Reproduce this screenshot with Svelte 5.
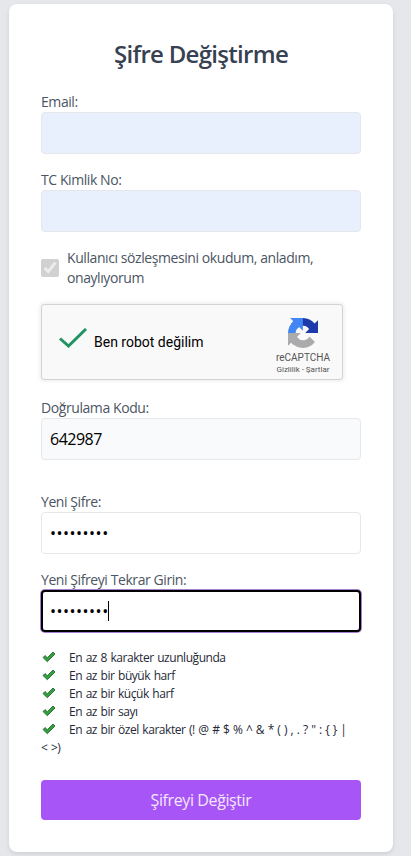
<script lang="ts">
	const rules = [
		'En az 8 karakter uzunluğunda',
		'En az bir büyük harf',
		'En az bir küçük harf',
		'En az bir sayı',
		'En az bir özel karakter (! @ # $ % ^ & * ( ) , . ? " : { } | <\u00a0>)'
	];
</script>

<div class="page">
	<form class="card" onsubmit={(e) => e.preventDefault()}>
		<h1>Şifre Değiştirme</h1>

		<div class="field email">
			<label for="email">Email:</label>
			<input id="email" class="autofilled" type="text" />
		</div>

		<div class="field tc">
			<label for="tc">TC Kimlik No:</label>
			<input id="tc" class="autofilled" type="text" />
		</div>

		<label class="agree">
			<input type="checkbox" checked disabled />
			<span>Kullanıcı sözleşmesini okudum, anladım, onaylıyorum</span>
		</label>

		<div class="captcha">
			<svg class="tick" viewBox="0 0 28 20" aria-hidden="true">
				<path d="M1 10.500 L9.500 18 L27 1" />
			</svg>
			<span class="captcha-text">Ben robot değilim</span>
			<div class="captcha-brand">
				<svg viewBox="0 0 64 64" aria-hidden="true">
					<path fill="#1c3aa9" d="M64 31.955l-.033-1.37V4.687l-7.16 7.16C50.948 4.674 42.033.093 32.05.093c-10.4 0-19.622 4.96-25.458 12.64l11.736 11.86a15.55 15.55 0 0 1 4.754-5.334c2.05-1.6 4.952-2.906 8.968-2.906.485 0 .86.057 1.135.163 4.976.393 9.288 3.14 11.828 7.124l-8.307 8.307c10.522-.04 22.4-.066 27.295.003" />
					<path fill="#4285f4" d="M31.862.094l-1.37.033H4.594l7.16 7.16C4.58 13.147 0 22.06 0 32.046c0 10.4 4.96 19.622 12.64 25.458L24.5 45.768a15.55 15.55 0 0 1-5.334-4.754c-1.6-2.05-2.906-4.952-2.906-8.968 0-.485.057-.86.163-1.135.393-4.976 3.14-9.288 7.124-11.828l8.307 8.307c-.04-10.522-.066-22.4.003-27.295" />
					<path fill="#ababab" d="M.001 32.045l.033 1.37v25.898l7.16-7.16c5.86 7.173 14.774 11.754 24.76 11.754 10.4 0 19.622-4.96 25.458-12.64l-11.736-11.86a15.55 15.55 0 0 1-4.754 5.334c-2.05 1.6-4.952 2.906-8.968 2.906-.485 0-.86-.057-1.135-.163-4.976-.393-9.288-3.14-11.828-7.124l8.307-8.307c-10.522.04-22.4.066-27.295-.003" />
				</svg>
				<span class="brand-name">reCAPTCHA</span>
				<span class="brand-links">Gizlilik - Şartlar</span>
			</div>
		</div>

		<div class="field code">
			<label for="code">Doğrulama Kodu:</label>
			<input id="code" class="readonly" type="text" value="642987" readonly />
		</div>

		<div class="field pass">
			<label for="pass">Yeni Şifre:</label>
			<input id="pass" type="password" value="123456789" />
		</div>

		<div class="field repeat">
			<label for="repeat">Yeni Şifreyi Tekrar Girin:</label>
			<div class="focused">
				<input id="repeat" type="password" value="123456789" />
				<i class="caret"></i>
			</div>
		</div>

		<ul class="rules">
			{#each rules as rule}
				<li>
					<svg viewBox="0 0 14 12" aria-hidden="true">
						<path d="M1 6.500 L3 4.500 L5.300 6.700 L11 1 L13 3 L5.300 10.700 Z" />
					</svg>{rule}
				</li>
			{/each}
		</ul>

		<button type="submit">Şifreyi Değiştir</button>
	</form>
</div>

<style>
	:global(body) {
		margin: 0;
		background: #e5e7eb;
	}

	.page {
		padding: 4px 18px 4px 9px;
		font-family: 'Open Sans', 'Noto Sans', sans-serif;
		color: #4b5563;
	}

	.card {
		box-sizing: border-box;
		height: 848px;
		padding: 32px;
		background: #fff;
		border-radius: 8px;
		box-shadow: 0 2px 4px rgba(0, 0, 0, 0.1);
	}

	h1 {
		margin: 0;
		font-size: 24px;
		line-height: 36px;
		font-weight: 600;
		letter-spacing: -0.7px;
		text-align: center;
		color: #374151;
	}

	.field label {
		display: block;
		font-size: 14px;
		line-height: 20px;
		letter-spacing: -0.42px;
	}

	.email { margin-top: 20px; }
	.tc { margin-top: 16px; }
	.code { margin-top: 18px; }
	.pass { margin-top: 32px; }
	.repeat { margin-top: 16px; }

	input[type='text'],
	input[type='password'] {
		display: block;
		box-sizing: border-box;
		width: 100%;
		height: 42px;
		padding: 0 8px;
		background: #fff;
		border: 1px solid #e5e7eb;
		border-radius: 4px;
		font-family: inherit;
		font-size: 16px;
		color: #000;
		outline: none;
	}

	input[type='password'] {
		letter-spacing: 0.5px;
	}

	.autofilled { background: #e8f0fe !important; }

	.readonly {
		background: #f9fafb !important;
		letter-spacing: -0.5px;
	}

	.agree {
		display: flex;
		align-items: center;
		gap: 8px;
		margin-top: 16px;
		font-size: 14px;
		line-height: 20px;
		letter-spacing: -0.42px;
	}

	.agree input {
		flex: none;
		width: 18px;
		height: 18px;
		margin: 0;
	}

	.captcha {
		display: flex;
		align-items: center;
		box-sizing: border-box;
		width: 302px;
		height: 76px;
		margin-top: 16px;
		padding: 0 11px 0 17px;
		background: #f9f9f9;
		border: 1px solid #d3d3d3;
		border-radius: 3px;
		box-shadow: 0 0 4px 1px rgba(0, 0, 0, 0.08);
		font-family: Roboto, sans-serif;
	}

	.tick {
		flex: none;
		width: 28px;
		height: 20px;
		margin-bottom: 8px;
	}

	.tick path {
		fill: none;
		stroke: #1f9463;
		stroke-width: 3;
	}

	.captcha-text {
		margin-left: 7px;
		font-size: 14px;
		color: #000;
	}

	.captcha-brand {
		display: flex;
		flex-direction: column;
		align-items: center;
		width: 56px;
		margin-left: auto;
		color: #555;
	}

	.captcha-brand svg {
		width: 30px;
		height: 30px;
		margin-top: 8px;
	}

	.brand-name {
		margin-top: 4px;
		font-size: 10px;
		line-height: 12px;
	}

	.brand-links {
		margin-top: 1px;
		font-size: 8px;
		line-height: 10px;
		white-space: nowrap;
	}

	.focused {
		position: relative;
	}

	.focused input {
		border: 2px solid #000;
		padding: 0 7px;
		box-shadow: 0 0 0 1px #a57fd0;
	}

	.caret {
		position: absolute;
		left: 67px;
		top: 11px;
		width: 1px;
		height: 20px;
		background: #000;
	}

	.rules {
		margin: 17px 0 0;
		padding: 0;
		list-style: none;
		font-size: 12px;
		line-height: 18px;
		letter-spacing: -0.45px;
		word-spacing: 0.85px;
		color: #1f2937;
	}

	.rules svg {
		width: 14px;
		height: 12px;
		margin: 0 13px 0 1px;
		vertical-align: -1px;
	}

	.rules path {
		fill: #34a040;
		stroke: #1c5c26;
		stroke-width: 0.8;
	}

	button {
		display: block;
		width: 100%;
		height: 40px;
		margin-top: 23px;
		background: #a855f7;
		border: 0;
		border-radius: 4px;
		font-family: inherit;
		font-size: 16px;
		letter-spacing: -0.4px;
		color: #f3e8ff;
	}
</style>
